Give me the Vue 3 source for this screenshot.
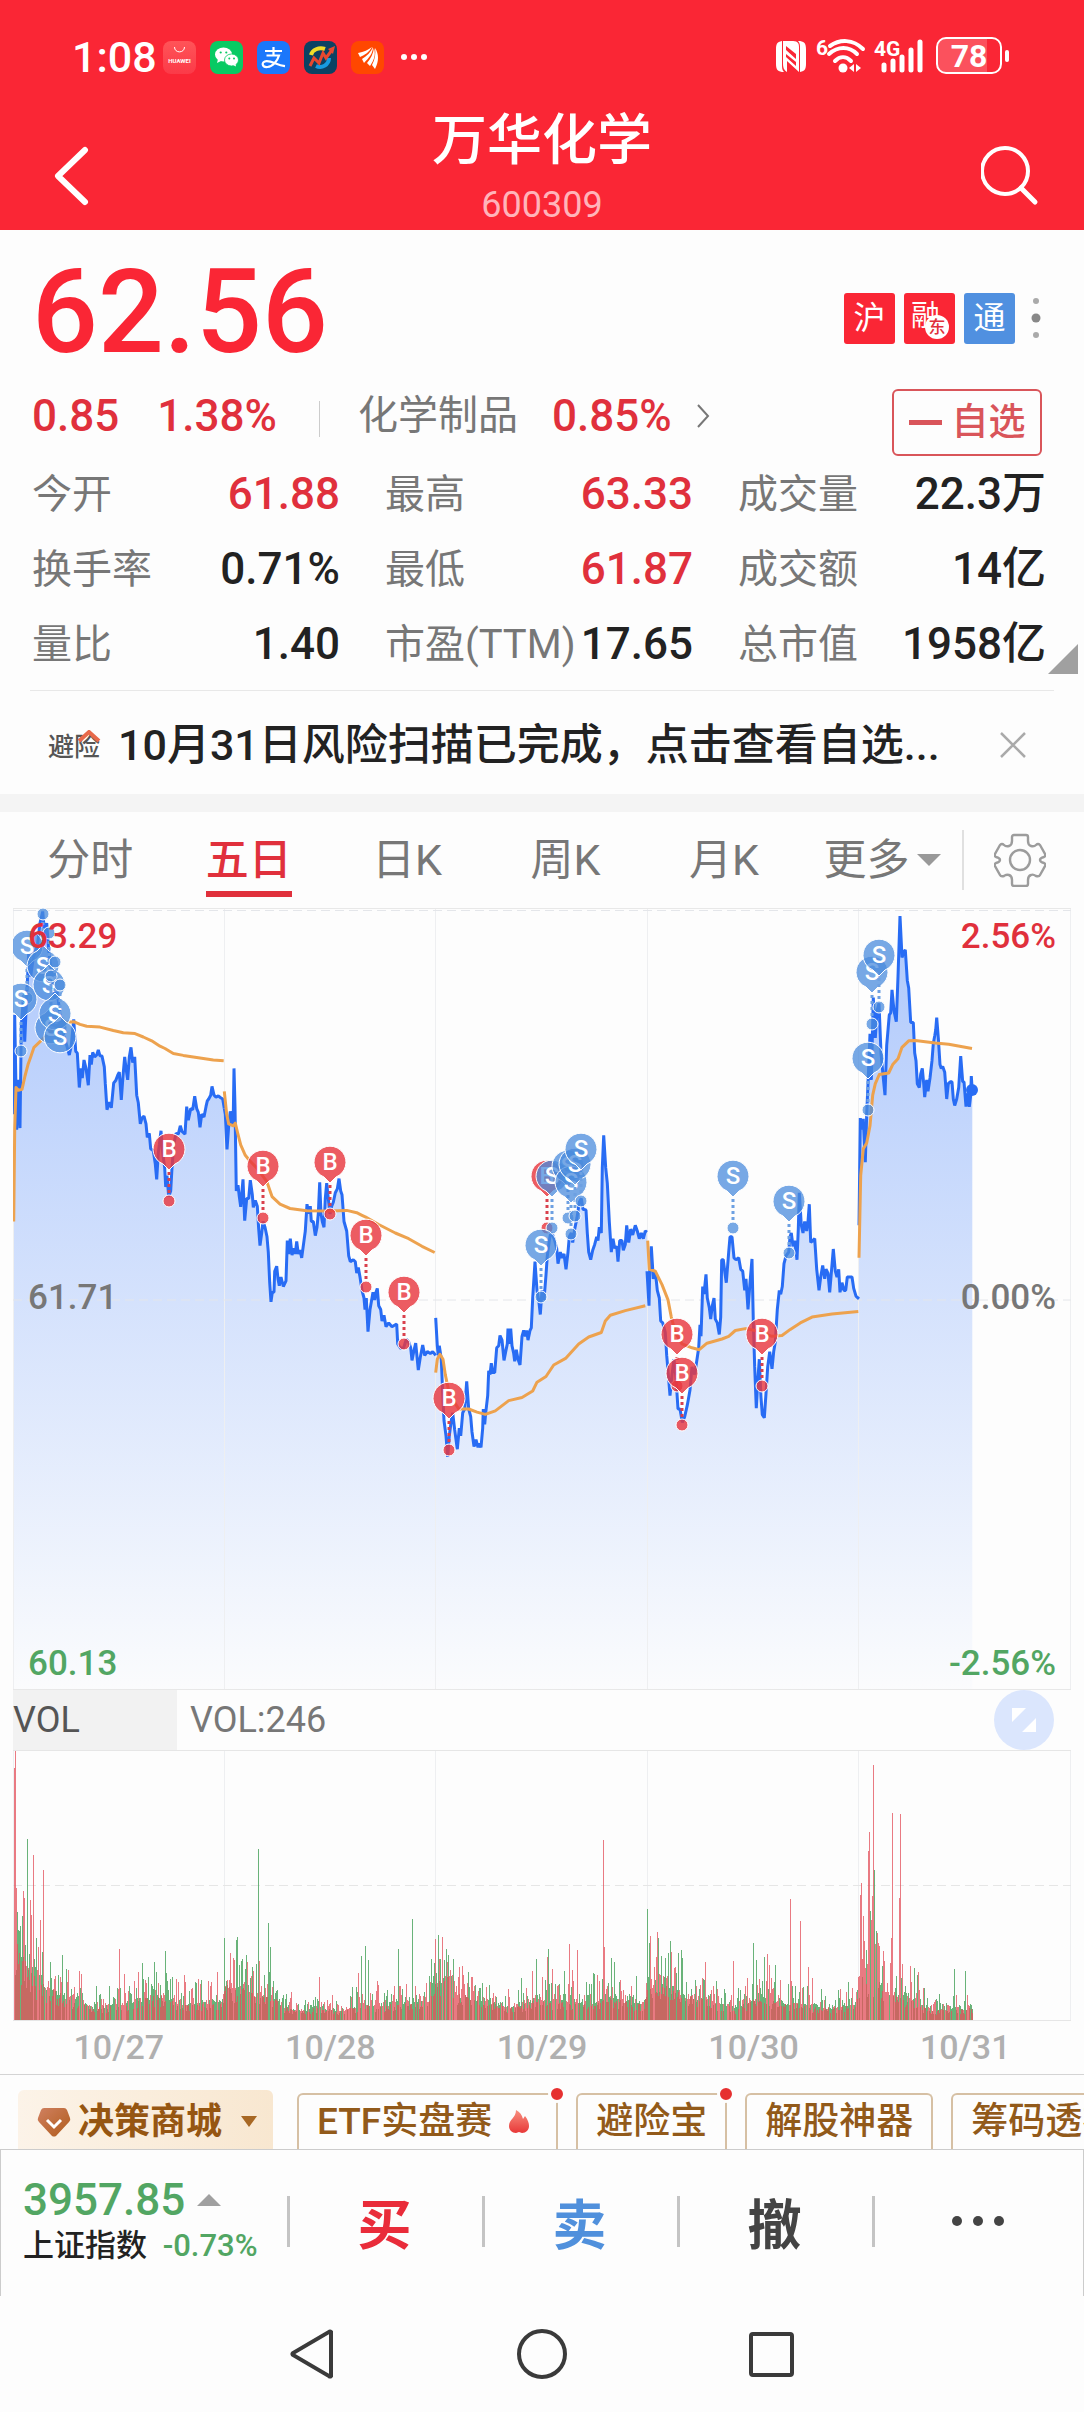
<script setup>
import { ref } from 'vue'

const stats = [
  { label: '今开', value: '61.88', up: true },
  { label: '最高', value: '63.33', up: true },
  { label: '成交量', value: '22.3万' },
  { label: '换手率', value: '0.71%' },
  { label: '最低', value: '61.87', up: true },
  { label: '成交额', value: '14亿' },
  { label: '量比', value: '1.40' },
  { label: '市盈(TTM)', value: '17.65' },
  { label: '总市值', value: '1958亿' },
]

const tabs = ['分时', '五日', '日K', '周K', '月K']
const active = ref('五日')
const dates = ['10/27', '10/28', '10/29', '10/30', '10/31']

/* Samples are "time,level" pairs; time runs in thirds of a chart unit. */
const toPoints = (list) =>
  list.flatMap(({ start, data }) =>
    data.split(' ').map((pair) => {
      const [t, v] = pair.split(',').map(Number)
      return [(start + t) / 3, 900 + v / 2.613]
    }),
  )
const toLine = (points) => 'M' + points.map(([x, y]) => x.toFixed(1) + ' ' + y.toFixed(1)).join('L')

const A = 0
const B = 1086
const C = 2166

const priceDays = [
  [
    { start: A, data: '42,560 44,300 50,600 55,470 60,596 64,330 70,260 74,370 80,250 86,140 92,200 100,150 112,120 120,60 128,30 134,90 140,60 146,130 155,200 165,260 172,240 180,300 190,350 200,380 208,405 214,380 221,312 227,395 232,400 238,490 243,440 247,465 252,418 258,440 265,484 270,405 274,430 278,398 284,410 290,405 295,392 300,407 306,408 313,436 316,480 321,548 328,528 334,543 341,478 347,472 353,458 358,450 364,522 369,460 374,410 378,440 383,470 388,410 393,385 398,425 404,410 410,510 415,530 421,585 426,570 432,565 438,585 442,620 448,610 452,650 460,655 466,690 470,730 475,660 478,640 483,603 488,660 494,700 497,750 501,720 506,775 512,760 516,700 521,640 528,610 535,612 541,590 546,605 555,612 560,540 565,575 572,545 578,548 584,513 590,545 595,555 600,594 605,560 612,567 618,540 622,525 626,520 632,510 636,487 642,510 648,515 655,512 661,516 668,520 673,545' },
  ],
  [
    { start: A, data: '673,545 676,560 681,652 686,590 691,552 697,590 700,560 702,440 705,540 709,760 714,745 718,775 722,802 729,730 734,838 740,780 746,780 751,732 757,770 760,803 766,785 772,800 776,860 780,903 785,870 789,840 795,855 801,880 805,920 809,1000 813,1050 817,1025 822,1025 824,970 830,957 834,990 838,1008 843,985 850,1010 858,995 862,890 866,925 871,885 876,928 882,910 886,925 890,892 895,925 900,915 905,935 912,890 916,865 921,795 926,820 931,800 934,840 940,840 946,877 951,855 955,820 959,738 963,820 967,840 972,855 976,780 980,740 986,790 990,820 995,800 1000,790 1006,765 1012,755 1017,728 1022,760 1026,770 1032,840 1040,865 1046,930 1051,945 1060,940 1066,945 1070,975 1075,960 1080,985' },
    { start: B, data: '0,1020 6,1040 9,1070 13,1040 18,1128 24,1070 30,1040 33,1025 38,1045 42,1025 46,1015 50,1060 56,1070 60,1100 66,1085 72,1115 80,1105 90,1115 100,1110 104,1108 107,1160 116,1172 125,1170 133,1148 140,1155 146,1170 150,1203 155,1180 161,1158 169,1228 175,1195 182,1163 188,1190 196,1180 205,1185 212,1180 221,1190' },
  ],
  [
    { start: B, data: '221,1092 226,1165 229,1190 232,1165 238,1200 242,1290 246,1360 252,1400 257,1455 262,1400 268,1360 272,1340 278,1385 282,1410 286,1435 292,1380 296,1400 302,1340 308,1330 314,1258 320,1330 326,1350 330,1390 336,1428 342,1410 348,1430 352,1420 357,1430 362,1380 364,1330 368,1370 371,1340 377,1295 380,1230 384,1240 388,1210 392,1235 398,1235 404,1170 410,1165 414,1138 420,1150 426,1203 431,1180 436,1160 438,1120 442,1160 446,1120 450,1165 455,1185 458,1205 463,1175 468,1200 474,1215 480,1140 485,1125 490,1140 494,1125 498,1150 504,1125 508,1118 512,1040 519,945 525,1020 530,1045 535,1083 540,1020 546,1045 552,980 556,930 562,890 566,870 572,875 578,890 584,910 588,950 595,920 600,935 606,925 612,965 618,920 622,880 628,870 632,895 638,860 645,830 652,790 658,780 663,808 672,810 676,870 680,920 686,940 692,915 698,900 704,880 708,890 712,855 718,870 721,700 725,615 731,700 736,740 742,840 748,920 753,885 758,910 764,905 768,945 773,890 780,890 784,915 790,900 794,850 800,895 806,860 812,875 820,850 826,865 832,885 838,870 844,885 850,865 855,868' },
  ],
  [
    { start: B, data: '855,970 861,1060 863,970 868,905 874,990 880,970 886,1020 892,1040 896,1100 902,1105 910,1130 914,1190 918,1230 924,1295 930,1240 936,1200 942,1250 948,1330 954,1330 961,1365 968,1350 976,1320 984,1280 990,1220 998,1240 1005,1200 1010,1170 1014,1110 1017,1140 1022,1010 1026,1030 1032,978 1036,1040 1042,1065 1046,1095 1051,1060 1056,1040 1060,1095 1066,1105 1072,1135 1076,1090 1079,940' },
    { start: C, data: '4,940 8,970 13,1000 20,920 24,880 30,880 36,935 42,940 50,935 56,965 62,970 68,1020 72,990 78,1070 84,1000 90,938 94,1100 98,1220 103,1328 107,1260 112,1200 117,1300 121,1345 127,1353 132,1290 137,1220 143,1180 150,1225 155,1180 160,1155 166,1070 172,1020 176,1030 181,1010 186,950 192,930 200,920 204,880 208,870 213,905 218,890 225,940 229,860 232,765 238,850 243,870 248,840 254,865 258,840 262,795 266,895 272,890 278,885 284,965 291,1020 296,985 302,955 308,990 312,965 318,975 323,1025 328,975 334,912 340,970 345,985 350,965 354,1025 360,1000 366,1020 371,1020 376,985 384,985 390,985 395,1015 402,1035 411,1042' },
  ],
  [
    { start: C, data: '411,850 415,570 420,600 424,572 430,685 434,560 438,480 444,350 448,470 454,255 460,360 465,290 471,270 477,400 484,465 489,510 494,380 498,340 502,300 506,295 510,235 516,290 523,318 528,200 534,42 540,150 546,135 550,130 556,210 560,230 566,320 574,320 578,400 582,420 586,480 592,490 596,455 601,440 605,480 608,515 614,470 618,500 624,465 630,420 634,375 638,355 641,340 644,307 649,360 654,430 658,440 662,435 668,450 674,520 679,480 685,475 690,475 694,520 698,537 704,520 710,490 716,408 722,475 726,475 732,540 736,505 742,540 746,510 748,460 751,500' },
  ],
].map(toPoints)

const averageDays = [
  [{ start: A, data: '41,840 44,600 48,490 55,497 66,495 75,460 84,430 92,410 102,385 120,370 150,345 190,320 221,318 240,325 260,330 300,332 340,341 370,347 405,349 430,358 455,368 480,382 495,388 520,401 550,406 600,413 640,418 671,420' }],
  [
    { start: A, data: '673,500 680,560 686,585 700,590 706,583 712,605 722,640 736,667 748,680 770,700 800,735 816,775 840,795 870,806 920,812 990,813 1040,811 1070,817' },
    { start: B, data: '0,824 10,828 50,848 100,870 140,885 180,905 218,921' },
  ],
  [{ start: B, data: '221,1235 226,1200 234,1187 243,1200 250,1240 262,1290 290,1330 320,1330 345,1338 370,1344 400,1335 440,1308 480,1300 512,1283 525,1260 552,1245 575,1215 612,1197 650,1160 680,1142 718,1130 730,1100 745,1085 790,1073 850,1060' }],
  [
    { start: B, data: '857,890 862,965 880,970 900,1005 918,1045 928,1090 940,1130 960,1160 990,1170 1012,1175 1035,1158 1080,1147' },
    { start: C, data: '20,1140 40,1125 70,1120 100,1125 150,1140 180,1138 205,1122 235,1105 270,1090 330,1082 409,1075' },
  ],
  [{ start: C, data: '411,935 416,720 424,650 434,635 444,590 452,510 460,480 472,456 500,452 512,430 528,415 540,385 560,368 580,367 640,374 680,377 750,388' }],
].map(toPoints)

const priceLines = priceDays.map(toLine)
const averageLines = averageDays.map(toLine)
const areas = priceDays.map(
  (p, i) => `${priceLines[i]}V1689H${p[0][0].toFixed(1)}Z`,
)

/* Buy and sell marks: x, y of the pin's head; "below" pins point up. */
const marks = [
  ['S', 27, 946], ['S', 21, 999], ['S', 43, 966, true], ['S', 49, 985, true],
  ['S', 51, 1028, true], ['S', 55, 1014, true], ['S', 60, 1037, true],
  ['B', 169, 1149], ['B', 263, 1166], ['B', 330, 1162], ['B', 366, 1235], ['B', 404, 1292], ['B', 449, 1398],
  ['B', 547, 1176], ['S', 552, 1176], ['S', 541, 1245], ['S', 568, 1166], ['S', 571, 1182], ['S', 575, 1164], ['S', 581, 1149],
  ['B', 677, 1334], ['B', 682, 1373], ['S', 733, 1176], ['B', 762, 1334], ['S', 789, 1201],
  ['S', 868, 1058], ['S', 872, 972], ['S', 879, 955],
].map(([side, x, y, below]) => ({ side, x, y, below }))

/* Volume of the large trades, by position: height and whether it rose. */
const spikes = {
  14: [252, 1], 15: [269, 1], 16: [132, 1], 17: [108, 0], 18: [90, 0], 23: [129, 1], 24: [122, 1], 27: [181, 0], 30: [120, 1], 31: [105, 1],
  33: [165, 1], 40: [100, 1], 43: [150, 1], 66: [51, 0], 79: [49, 1], 119: [71, 1], 124: [46, 1], 138: [48, 1], 156: [48, 0], 165: [69, 0],
  224: [82, 0], 234: [60, 1], 236: [80, 0], 237: [83, 0], 241: [59, 0], 256: [56, 0], 258: [171, 0], 268: [97, 0], 270: [73, 0],
  319: [43, 1], 358: [47, 1], 361: [64, 0], 365: [74, 0], 368: [60, 0], 398: [71, 0], 412: [101, 0],
  435: [81, 1], 444: [60, 0], 446: [71, 0], 532: [49, 1], 536: [61, 0], 547: [63, 1], 548: [71, 0], 552: [51, 1], 569: [76, 1], 572: [50, 1], 577: [70, 1],
  603: [180, 1], 604: [73, 1], 611: [62, 0], 647: [111, 0], 650: [84, 1], 656: [63, 1], 661: [64, 0], 668: [67, 0], 670: [79, 0], 671: [68, 1],
  678: [67, 0], 681: [70, 0], 682: [62, 0], 705: [58, 1], 733: [59, 1], 753: [77, 0], 756: [60, 0], 764: [63, 0], 790: [121, 1], 800: [99, 1], 808: [53, 1],
  860: [125, 1], 861: [137, 1], 863: [104, 1], 868: [169, 1], 869: [188, 1], 871: [100, 1], 872: [124, 1], 873: [255, 1], 874: [150, 0], 875: [76, 1],
  879: [74, 1], 882: [54, 0], 891: [82, 1], 892: [207, 1], 899: [122, 1], 900: [206, 1], 914: [52, 0], 917: [45, 0], 954: [51, 0], 965: [49, 0],
}
/* Base level by position, joined by straight lines. */
const levels = [
  [13, 90], [24, 66], [36, 44], [50, 34], [65, 26], [80, 20], [95, 13], [110, 17], [135, 20], [158, 28], [175, 19], [200, 18], [222, 22],
  [224, 38], [242, 34], [258, 27], [270, 30], [280, 17], [298, 9], [315, 14], [340, 10], [362, 17], [400, 17], [430, 22],
  [435, 44], [447, 48], [458, 28], [480, 22], [510, 14], [535, 22], [560, 22], [590, 17], [606, 26], [620, 22], [644, 19],
  [647, 40], [670, 36], [685, 27], [705, 22], [735, 14], [762, 28], [785, 18], [805, 18], [825, 13], [856, 18],
  [859, 48], [875, 46], [890, 30], [912, 24], [930, 11], [973, 13],
]
const levelAt = (x) => {
  const k = Math.max(1, levels.findIndex(([p]) => p >= x))
  const [x0, v0] = levels[k - 1]
  const [x1, v1] = levels[k]
  return v0 + ((v1 - v0) * (x - x0)) / (x1 - x0)
}
let seed = 20251
const random = () => (seed = (seed * 16807) % 2147483647) / 2147483647
let redBars = ''
let greenBars = ''
for (let x = 14; x < 973; x++) {
  const level = levelAt(x)
  const low = Math.round(level * (0.45 + random() * 0.5))
  const high = Math.round(level * (0.8 + random() * random() * 1.8))
  const red = random() > 0.5
  const spike = spikes[x]
  const top = spike ? spike[0] : high
  const isRed = spike ? spike[1] === 1 : red
  const main = `M${x + 0.5} 2020v${-top}`
  const other = `M${x + 0.5} 2020v${-low}`
  if (isRed) {
    redBars += main
    if (random() > 0.4) greenBars += other
  } else {
    greenBars += main
    if (random() > 0.4) redBars += other
  }
}
const dayLines = [13, 224, 435, 647, 858, 1070]
</script>

<template>
  <div class="screen">
    <header class="top">
      <div class="status">
        <span class="clock">1:08</span>
        <div class="apps">
          <svg viewBox="0 0 33 33"><defs><linearGradient id="hw" x2="0" y2="1"><stop stop-color="#ff5458" /><stop offset="1" stop-color="#fb3a48" /></linearGradient></defs><rect width="33" height="33" rx="8" fill="url(#hw)" /><path d="M11.500 6c0 6.500 10 6.500 10 0" fill="none" stroke="#fff" stroke-width="1" /><text x="16.500" y="21.500" font-size="6" font-weight="700" text-anchor="middle" fill="#fff">HUAWEI</text></svg>
          <svg viewBox="0 0 33 33"><rect width="33" height="33" rx="8" fill="#08ca63" /><ellipse cx="13.500" cy="13.500" rx="8.500" ry="7" fill="#fff" /><path d="M8 18l-1 4 4-2z" fill="#fff" /><ellipse cx="21.500" cy="19" rx="7" ry="6" fill="#fff" stroke="#08ca63" stroke-width=".8" /><path d="M23 24l3 1.500-.5-3z" fill="#fff" /><g fill="#08ca63"><circle cx="10.700" cy="11.500" r="1.100" /><circle cx="16.300" cy="11.500" r="1.100" /><circle cx="19.300" cy="17.500" r="1" /><circle cx="24" cy="17.500" r="1" /></g></svg>
          <svg viewBox="0 0 33 33"><rect width="33" height="33" rx="8" fill="#1b77fb" /><g fill="none" stroke="#fff" stroke-width="2.200"><path d="M8 10h17M16.500 6v9M9.500 14.500h12.500c-1.500 5-6 11-11.500 11.500-6 .5-6.500-5.500-1-5.800 6-.3 10 4 18.500 5" /></g></svg>
          <svg viewBox="0 0 33 33"><rect width="33" height="33" rx="8" fill="#0c4263" /><path d="M7 14a10 8 0 0 1 14-6" fill="none" stroke="#f0dc28" stroke-width="4" /><path d="M25 17a9 9 0 0 1-13 8" fill="none" stroke="#179be0" stroke-width="4" /><path d="M6 25l4-8 5 5 4-10 3 5 6-8" fill="none" stroke="#e8482f" stroke-width="3" /><path d="M31 5l-2 8-5-5z" fill="#e8482f" /></svg>
          <svg viewBox="0 0 33 33"><rect width="33" height="33" rx="8" fill="#ff4700" /><g fill="#fff"><path d="M7 12c6-1 10-3 14-6-3 5-7 8-12 10z" /><path d="M11 18c5-3 9-7 11-12 0 6-4 11-9 16z" /><path d="M16 22c4-5 6-9 7-15 2 7 0 12-4 18z" /><path d="M21 24c3-6 4-11 3-17 4 6 4 13 0 21z" /></g></svg>
          <svg class="more" viewBox="0 0 28 33"><g fill="#fff"><circle cx="4" cy="16" r="3" /><circle cx="14" cy="16" r="3" /><circle cx="24" cy="16" r="3" /></g></svg>
        </div>
        <svg class="signals" viewBox="0 0 240 40">
          <g fill="#fff">
            <path d="M9 4c-6 0-8 2-8 8v15c0 6 2 8 8 8h0c-2-2-2-4-2-8V4zM23 35c6 0 8-2 8-8V12c0-6-2-8-8-8 2 2 2 4 2 8v23z" />
            <path d="M8 4h8c6 0 8 1 8 6v25L12 24v11c-3-2-4-4-4-9zM11 9v4l10 9v-5zM11 17v3l10 9v-4z" fill-rule="evenodd" />
            <text x="41" y="18" font-size="21" font-weight="700">6</text>
            <circle cx="68" cy="31" r="4.500" />
            <path d="M74 31l5-4v8zM81 27l5 4-5 4z" />
          </g>
          <g fill="none" stroke="#fff" stroke-width="4" stroke-linecap="round">
            <path d="M55 9c10-7 23-7 33 3M54 17c9-8 20-8 28 0M60 24c5-5 11-5 16 0" />
            <path d="M109 28v5M118 24v9M127 20v13M136 13v20M145 5v28" stroke-width="5" />
          </g>
          <text x="99" y="19" font-size="21" font-weight="700" fill="#fff">4G</text>
          <path d="M170 2h42v34h-42a7 7 0 0 1-7-7V9a7 7 0 0 1 7-7z" fill="#fff" opacity=".2" />
          <rect x="162" y="1" width="64" height="35" rx="9" fill="none" stroke="#fff" stroke-width="2" />
          <rect x="230" y="13" width="4" height="12" rx="2" fill="#fff" />
          <text x="194" y="30" font-size="32" font-weight="700" text-anchor="middle" fill="#fff">78</text>
        </svg>
      </div>
      <div class="titlebar">
        <button class="icon-button" aria-label="返回"><svg viewBox="0 0 60 60"><path d="M42 4L15 30l27 26" fill="none" stroke="#fff" stroke-width="6" stroke-linecap="round" stroke-linejoin="round" /></svg></button>
        <div class="title">
          <h1>万华化学</h1>
          <p>600309</p>
        </div>
        <button class="icon-button" aria-label="搜索"><svg viewBox="0 0 60 60"><g fill="none" stroke="#fff" stroke-width="4" stroke-linecap="round"><circle cx="24" cy="25" r="23" /><path d="M40 42l14 14" stroke-width="5" /></g></svg></button>
      </div>
    </header>

    <section class="quote">
      <div class="price-row">
        <strong class="price">62.56</strong>
        <div class="badges">
          <span class="badge">沪</span>
          <span class="badge finance">融<i>东</i></span>
          <span class="badge blue">通</span>
          <button class="dots" aria-label="更多标签"><svg viewBox="0 0 10 42"><circle cx="5" cy="4" r="3" fill="#aaa" /><circle cx="5" cy="21" r="4.500" fill="#888" /><circle cx="5" cy="38" r="3" fill="#aaa" /></svg></button>
        </div>
      </div>
      <div class="change-row">
        <span class="num up">0.85</span>
        <span class="num up percent">1.38%</span>
        <span class="divider"></span>
        <a href="#" class="sector">化学制品 <span class="num up">0.85%</span>
          <svg viewBox="0 0 14 26"><path d="M2 2l10 11L2 24" fill="none" stroke="#777" stroke-width="2" /></svg>
        </a>
        <button class="watch"><span class="minus"></span>自选</button>
      </div>
      <dl class="stats">
        <div v-for="s in stats" :key="s.label">
          <dt>{{ s.label }}</dt>
          <dd :class="{ up: s.up }">{{ s.value }}</dd>
        </div>
      </dl>
      <span class="corner"></span>
    </section>

    <section class="notice">
      <span class="brand">避险<svg viewBox="0 0 24 14"><path d="M2 11L12 2l10 9" fill="none" stroke="#e8694a" stroke-width="4" /></svg></span>
      <a href="#">10月31日风险扫描已完成，点击查看自选...</a>
      <button aria-label="关闭"><svg viewBox="0 0 26 26"><path d="M1 1l24 24M25 1L1 25" stroke="#aaa" stroke-width="2.500" /></svg></button>
    </section>

    <nav class="tabs">
      <button v-for="t in tabs" :key="t" :class="{ active: t === active }" @click="active = t"><span>{{ t }}</span></button>
      <button class="more-tab">更多<i></i></button>
      <button class="gear" aria-label="设置">
        <svg viewBox="0 0 52 54"><g fill="none" stroke="#9c9c9c" stroke-width="2.400" stroke-linejoin="round"><path d="M20 2h12q2 0 2 2v4q0 4 3 5t5-1q2-2 4 0l5 9q1 2-1 3-4 1-4 3t4 3q2 1 1 3l-5 9q-1 2-4 1-3-2-5-1-3 1-3 5v4q0 2-2 2H20q-2 0-2-2v-4q0-4-3-5t-5 1q-3 1-4-1l-5-9q-1-2 1-3 4-1 4-3t-4-3q-2-1-1-3l5-9q2-2 4 0 2 2 5 1t3-5V4q0-2 2-2z" /><circle cx="26" cy="27" r="10" /></g></svg>
      </button>
    </nav>

    <section class="chart">
      <svg viewBox="13 908 1058 782" role="img" aria-label="五日走势">
        <defs>
          <linearGradient id="area" gradientUnits="userSpaceOnUse" x1="0" y1="910" x2="0" y2="1690">
            <stop stop-color="#286efa" stop-opacity=".37" />
            <stop offset="1" stop-color="#286efa" stop-opacity=".01" />
          </linearGradient>
        </defs>
        <path v-for="(d, i) in areas" :key="'a' + i" :d="d" fill="url(#area)" />
        <g stroke="#eeeff1" stroke-width="1">
          <path v-for="x in dayLines" :key="x" :d="`M${x + 0.5} 908V1690`" />
          <path d="M13 908.500H1071M13 1689.500H1071" stroke="#e8e8e8" />
          <path d="M13 910.500H1071M13 1300H1071" stroke="#e4e6ea" stroke-dasharray="9 5" />
        </g>
        <path v-for="(d, i) in priceLines" :key="'p' + i" :d="d" fill="none" stroke="#286cf4" stroke-width="3" stroke-linejoin="bevel" />
        <path v-for="(d, i) in averageLines" :key="'v' + i" :d="d" fill="none" stroke="#eda24e" stroke-width="3" stroke-linejoin="round" />
        <circle cx="972" cy="1090" r="6" fill="#286cf4" />
        <g v-for="(m, i) in marks" :key="'m' + i" :class="['mark', m.side === 'B' ? 'buy' : 'sell']" :transform="`translate(${m.x} ${m.y})`">
          <g :transform="m.below ? 'scale(1 -1)' : null">
            <path class="stem" d="M0 23V46" />
            <path d="M-6 15A16 16 0 1 1 6 15L0 21Z" />
            <circle cy="52" r="6" />
          </g>
          <text y="8">{{ m.side }}</text>
        </g>
      </svg>
      <span class="axis tl up">63.29</span>
      <span class="axis tr up">2.56%</span>
      <span class="axis ml">61.71</span>
      <span class="axis mr">0.00%</span>
      <span class="axis bl down">60.13</span>
      <span class="axis br down">-2.56%</span>
    </section>

    <section class="volume">
      <div class="volume-head">
        <button class="indicator">VOL</button>
        <span>VOL:246</span>
        <button class="expand" aria-label="全屏"><svg viewBox="0 0 60 60"><circle cx="30" cy="30" r="30" fill="#dbe6fd" /><path d="M18 18h14L18 32zM42 42H28l14-14z" fill="#fff" /></svg></button>
      </div>
      <svg viewBox="13 1750 1058 271" role="img" aria-label="成交量">
        <g stroke="#eeeff1">
          <path v-for="x in dayLines" :key="x" :d="`M${x + 0.5} 1750V2021`" />
          <path d="M13 1750.500H1071M13 2020.500H1071" stroke="#e6e6e6" />
          <path d="M13 1885.500H1071" stroke="#e6e6e6" stroke-dasharray="9 5" />
        </g>
        <path :d="greenBars" stroke="#62b072" opacity=".95" />
        <path :d="redBars" stroke="#e4525c" opacity=".76" />
      </svg>
      <div class="dates"><span v-for="d in dates" :key="d">{{ d }}</span></div>
    </section>

    <nav class="tools">
      <button class="shop">
        <svg viewBox="0 0 34 30"><defs><linearGradient id="gem" x2="1" y2="1"><stop stop-color="#d08060" /><stop offset="1" stop-color="#b05c1c" /></linearGradient></defs><path d="M7 1h20q2 0 3 2l3 8q1 2-1 4L19 29q-2 1-4 0L2 15q-2-2-1-4L4 3q1-2 3-2z" fill="url(#gem)" /><path d="M10 13l7 7 7-7" fill="none" stroke="#fff" stroke-width="3" /></svg>
        决策商城<i></i>
      </button>
      <button class="hot">ETF实盘赛<svg viewBox="0 0 20 24"><defs><linearGradient id="fire" x2="0" y2="1"><stop stop-color="#f89080" /><stop offset="1" stop-color="#e83838" /></linearGradient></defs><path d="M7 0c4 2 6 5 7 9l2-3c3 4 4 7 4 10 0 4-3 7-7 7-1 0-2-1-3-1s-2 1-3 1c-4 0-7-3-7-7 0-7 7-8 7-16z" fill="url(#fire)" /></svg><b></b></button>
      <button>避险宝<b></b></button>
      <button>解股神器</button>
      <button>筹码透视</button>
    </nav>

    <footer class="trade">
      <button class="index">
        <span class="index-value">3957.85<i></i></span>
        <span class="index-name">上证指数 <em>-0.73%</em></span>
      </button>
      <button class="action buy-text">买</button>
      <button class="action sell-text">卖</button>
      <button class="action">撤</button>
      <button class="action" aria-label="更多"><svg viewBox="0 0 52 10"><g fill="#444"><circle cx="5" cy="5" r="5" /><circle cx="26" cy="5" r="5" /><circle cx="47" cy="5" r="5" /></g></svg></button>
    </footer>

    <nav class="system">
      <button aria-label="后退"><svg viewBox="0 0 50 50"><path d="M43 3v44q-1 1-2 0L5 26q-1-1 0-2L41 3q1-1 2 0z" /></svg></button>
      <button aria-label="主页"><svg viewBox="0 0 50 50"><circle cx="25" cy="25" r="23" /></svg></button>
      <button aria-label="最近"><svg viewBox="0 0 50 50"><rect x="5" y="5" width="41" height="41" rx="2" /></svg></button>
    </nav>
  </div>
</template>

<style>
body {
  margin: 0;
  background: #fdfdfd;
}
</style>

<style scoped>
.screen {
  font-family: Roboto, "Noto Sans CJK SC", sans-serif;
  font-weight: 500;
  color: #222;
  background: #fdfdfd;
  overflow: hidden;
}
button {
  font: inherit;
  color: inherit;
  background: none;
  border: 0;
  padding: 0;
  margin: 0;
  white-space: nowrap;
}
a {
  color: inherit;
  text-decoration: none;
}
svg {
  display: block;
}
i, em {
  font-style: normal;
}
.up {
  color: #e0303c;
}
.down {
  color: #52a663;
}
.num {
  font-size: 44px;
}
.top {
  height: 230px;
  background: #fa2635;
  color: #fff;
}
.status {
  display: flex;
  align-items: center;
  height: 40px;
  padding: 37px 72px 0;
}
.clock {
  font-size: 43px;
  line-height: 40px;
  width: 91px;
}
.apps {
  display: flex;
  gap: 14px;
}
.apps svg {
  width: 33px;
  height: 33px;
}
.apps .more {
  width: 28px;
  margin-left: 2px;
}
.signals {
  width: 240px;
  height: 40px;
  margin-left: auto;
  margin-right: -3px;
}
.titlebar {
  display: flex;
  justify-content: space-between;
  align-items: flex-end;
  height: 153px;
  padding: 0 43px;
}
.icon-button {
  margin-bottom: 24px;
}
.icon-button svg {
  width: 60px;
  height: 60px;
}
.title {
  text-align: center;
}
.title h1 {
  margin: 0;
  font-size: 55px;
  line-height: 72px;
  font-weight: 500;
}
.title p {
  margin: 4px 0 0;
  font-size: 36px;
  line-height: 50px;
  font-weight: 400;
  color: #ffb4ba;
}
.quote {
  position: relative;
  padding: 22px 38px 8px 32px;
}
.price-row {
  display: flex;
  justify-content: space-between;
  align-items: center;
}
.price {
  font-size: 116px;
  line-height: 120px;
  font-weight: 500;
  color: #fa2635;
}
.badges {
  display: flex;
  align-items: center;
  gap: 9px;
  padding: 12px 5px 0 0;
}
.badge {
  position: relative;
  width: 51px;
  height: 51px;
  border-radius: 3px;
  background: #fa2635;
  color: #fff;
  font-size: 32px;
  font-weight: 400;
  line-height: 51px;
  text-align: center;
}
.badge.blue {
  background: #5090e0;
}
.badge.finance {
  font-size: 29px;
  line-height: 46px;
  text-indent: -8px;
}
.badge i {
  position: absolute;
  right: 6px;
  bottom: 5px;
  width: 24px;
  height: 24px;
  border-radius: 50%;
  background: #fff;
  color: #e0303c;
  font-size: 17px;
  font-weight: 500;
  line-height: 24px;
  text-indent: 0;
}
.dots {
  margin-left: 7px;
}
.dots svg {
  width: 10px;
  height: 42px;
}
.change-row {
  display: flex;
  align-items: flex-start;
  margin-top: 17px;
  height: 66px;
  line-height: 54px;
}
.percent {
  margin-left: 38px;
}
.divider {
  width: 1px;
  height: 36px;
  margin: 12px 38px 0 42px;
  background: #ccc;
}
.sector {
  display: flex;
  align-items: center;
  font-size: 40px;
  font-weight: 400;
  color: #777;
}
.sector .num {
  font-weight: 500;
  margin-left: 34px;
}
.sector svg {
  width: 14px;
  height: 26px;
  margin-left: 24px;
}
.watch {
  display: flex;
  align-items: center;
  justify-content: center;
  gap: 10px;
  width: 150px;
  height: 67px;
  margin-left: auto;
  margin-right: 4px;
  border: 2px solid #d9555a;
  border-radius: 6px;
  color: #d9555a;
  font-size: 37px;
}
.minus {
  width: 33px;
  height: 5px;
  background: #d9555a;
}
.stats {
  display: grid;
  grid-template-columns: repeat(3, 1fr);
  column-gap: 45px;
  margin: 2px 0 0;
}
.stats div {
  display: flex;
  justify-content: space-between;
  height: 75px;
  line-height: 75px;
  white-space: nowrap;
}
.stats dt {
  font-size: 40px;
  font-weight: 400;
  color: #777;
}
.stats dd {
  margin: 0;
  font-size: 44px;
}
.corner {
  position: absolute;
  right: 6px;
  bottom: 16px;
  border: 15px solid transparent;
  border-right-color: #a0a0a0;
  border-bottom-color: #a0a0a0;
}
.notice {
  display: flex;
  align-items: center;
  height: 99px;
  margin: 0 30px;
  padding: 4px 28px 0 18px;
  border-top: 1px solid #e8e8e8;
}
.notice a {
  font-size: 43px;
  line-height: 60px;
  margin-left: 18px;
  white-space: nowrap;
}
.brand {
  position: relative;
  font-size: 26px;
  font-weight: 500;
  color: #555;
  width: 52px;
  white-space: nowrap;
}
.brand svg {
  position: absolute;
  right: -1px;
  top: 4px;
  width: 24px;
  height: 14px;
}
.notice button {
  margin-left: auto;
}
.notice button svg {
  width: 26px;
  height: 26px;
}
.tabs {
  display: flex;
  align-items: center;
  height: 96px;
  border-top: 18px solid #f4f4f4;
  padding-left: 11px;
  font-size: 43px;
  font-weight: 400;
  color: #777;
}
.tabs button {
  flex: 158 1 0;
  height: 96px;
  line-height: 92px;
}
.tabs span {
  display: inline-block;
  height: 78px;
}
.tabs .active span {
  border-bottom: 6px solid #e0303c;
  color: #e0303c;
  font-weight: 500;
  height: 77px;
}
.tabs .more-tab {
  display: flex;
  align-items: center;
  justify-content: center;
  gap: 8px;
}
.more-tab i {
  border: 12px solid transparent;
  border-bottom: 0;
  border-top-color: #999;
}
.tabs .gear {
  flex: 120 1 0;
  height: 60px;
  border-left: 2px solid #e0e0e0;
  display: flex;
  align-items: center;
  justify-content: center;
}
.gear svg {
  width: 52px;
  height: 54px;
  margin-right: 8px;
}
.chart {
  position: relative;
  margin: 0 13px;
}
.chart svg, .volume > svg {
  width: 100%;
  height: auto;
}
.mark path, .mark circle {
  stroke: #fff;
  stroke-width: 1;
}
.buy path, .buy circle {
  fill: #e83840;
  fill-opacity: .82;
}
.sell path, .sell circle {
  fill: #4a8bdc;
  fill-opacity: .75;
}
.mark .stem {
  stroke-width: 3;
  stroke-dasharray: 3 3;
}
.buy .stem {
  stroke: #d9404c;
}
.sell .stem {
  stroke: #6da0e2;
}
.mark text {
  fill: #fff;
  font-size: 24px;
  font-weight: 500;
  text-anchor: middle;
}
.axis {
  position: absolute;
  font-size: 35px;
  line-height: 36px;
  color: #777;
}
.axis.up {
  color: #e0303c;
}
.axis.down {
  color: #52a663;
}
.tl, .ml, .bl {
  left: 15px;
}
.tr, .mr, .br {
  right: 15px;
}
.tl, .tr {
  top: 11px;
}
.ml, .mr {
  top: 372px;
}
.bl, .br {
  bottom: 8px;
}
.volume {
  margin: 0 13px;
}
.volume-head {
  display: flex;
  align-items: center;
  height: 60px;
  font-size: 36px;
  line-height: 56px;
  font-weight: 400;
  color: #777;
}
.indicator {
  width: 164px;
  height: 60px;
  margin-right: 13px;
  background: #f2f2f2;
  color: #555;
  text-align: left;
}
.expand {
  margin-left: auto;
  margin-right: 17px;
}
.expand svg {
  width: 60px;
  height: 60px;
}
.dates {
  display: grid;
  grid-template-columns: repeat(5, 1fr);
  height: 53px;
  line-height: 53px;
  font-size: 34px;
  font-weight: 500;
  color: #b0b0b0;
  text-align: center;
}
.tools {
  display: flex;
  align-items: flex-end;
  gap: 18px;
  height: 74px;
  padding-left: 18px;
  border-top: 1px solid #d4d4d4;
  color: #925a1a;
  font-size: 37px;
}
.tools button {
  position: relative;
  flex: none;
  display: flex;
  align-items: center;
  box-sizing: border-box;
  height: 56px;
  line-height: 54px;
  padding: 0 18px;
  border: 2px solid #d6c0a4;
  border-bottom: 0;
  border-radius: 6px 6px 0 0;
}
.tools .shop {
  height: 59px;
  margin-right: 6px;
  padding: 4px 16px 0 19px;
  border: 0;
  background: linear-gradient(90deg, #fcf3e8, #f8e7d0);
  font-size: 36px;
  font-weight: 700;
  color: #965612;
}
.shop svg {
  width: 34px;
  height: 30px;
  margin-right: 7px;
}
.shop i {
  margin-left: 19px;
  border: 8px solid transparent;
  border-top: 11px solid #a86824;
  border-bottom: 0;
}
.tools .hot {
  padding-right: 27px;
}
.hot svg {
  width: 20px;
  height: 24px;
  margin-left: 17px;
}
.tools b {
  position: absolute;
  right: -10px;
  top: -10px;
  width: 12px;
  height: 12px;
  border: 3px solid #fdfdfd;
  border-radius: 50%;
  background: #e63030;
}
.trade {
  display: grid;
  grid-template-columns: 286fr 195fr 195fr 195fr 211fr;
  height: 146px;
  border: 1px solid #ccc;
  border-bottom: 0;
}
.index {
  display: flex;
  flex-direction: column;
  align-items: flex-start;
  padding: 27px 0 0 22px;
}
.index-value {
  display: flex;
  align-items: center;
  gap: 12px;
  font-size: 44px;
  line-height: 46px;
  color: #52a663;
}
.index-value i {
  border: 12px solid transparent;
  border-top: 0;
  border-bottom-color: #a0a0a0;
}
.index-name {
  font-size: 31px;
  line-height: 46px;
}
.index-name em {
  margin-left: 8px;
  color: #52a663;
  font-weight: 500;
}
.action {
  display: flex;
  align-items: center;
  justify-content: center;
  padding-bottom: 4px;
  font-size: 54px;
  font-weight: 700;
  color: #444;
}
.action::before {
  content: "";
  width: 3px;
  height: 51px;
  margin-right: auto;
  background: #c4c4c4;
}
.action::after {
  content: "";
  width: 3px;
  margin-left: auto;
}
.action svg {
  width: 52px;
  height: 10px;
}
.buy-text {
  color: #e92c3a;
}
.sell-text {
  color: #5090dc;
}
.system {
  display: flex;
  justify-content: center;
  align-items: center;
  gap: 179px;
  height: 115px;
}
.system svg {
  width: 50px;
  height: 50px;
  fill: none;
  stroke: #3a3a3a;
  stroke-width: 4;
}
</style>
